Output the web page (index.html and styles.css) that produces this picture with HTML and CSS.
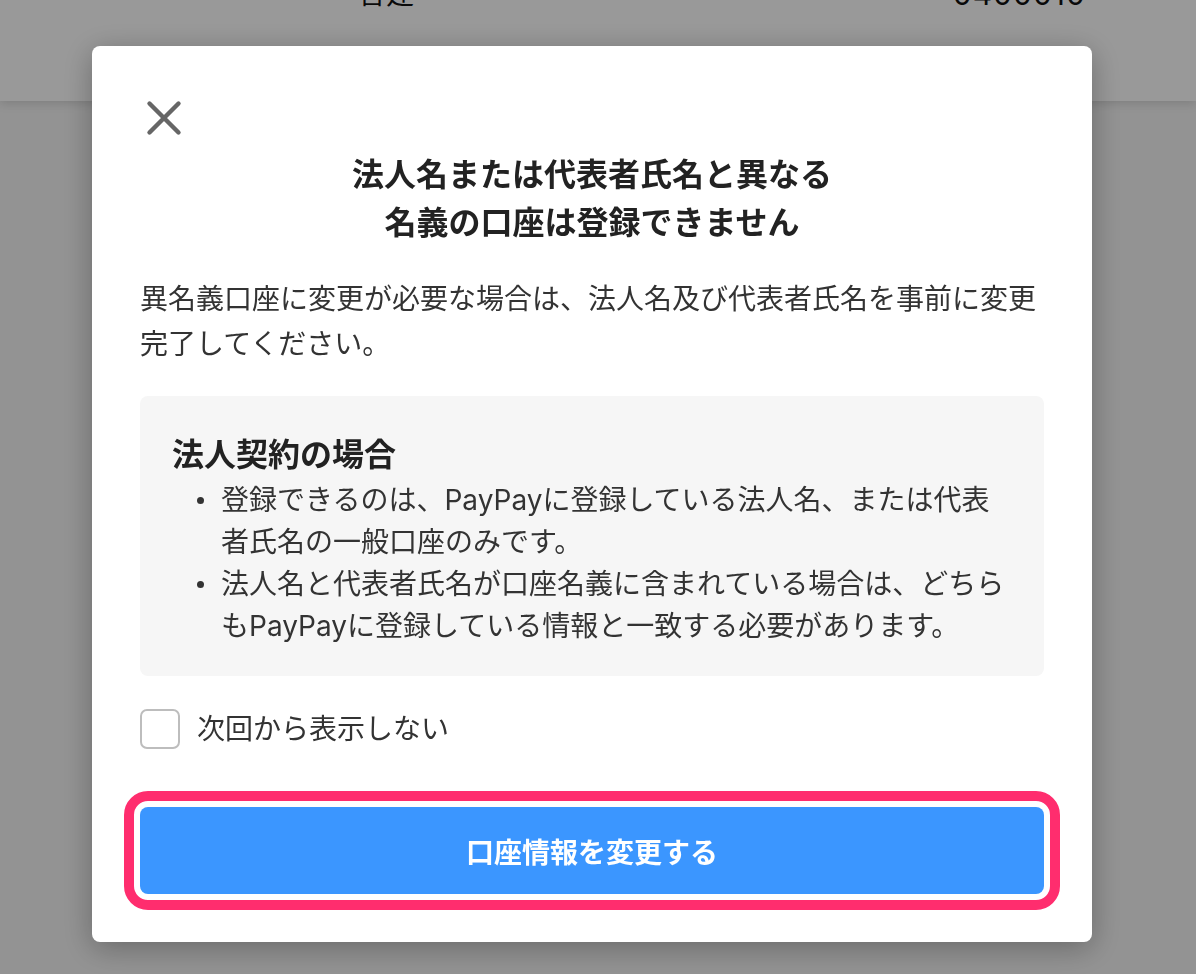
FILE: index.html
```html
<!DOCTYPE html>
<html lang="ja">
<head>
<meta charset="utf-8">
<title>口座情報</title>
<link rel="stylesheet" href="styles.css">
</head>
<body>
  <header class="page-header">
    <div class="header-row">
      <span class="header-label">合建</span>
      <span class="header-value">0400010</span>
    </div>
  </header>
  <main class="page-main"></main>

  <div class="overlay">
    <div class="modal" role="dialog">
      <button class="close-btn" aria-label="閉じる">
        <svg viewBox="0 0 36 36" width="36" height="36" aria-hidden="true">
          <path d="M3.5 3.5 L32.5 32.5 M32.5 3.5 L3.5 32.5" fill="none" stroke="#666" stroke-width="4.4" stroke-linecap="round"/>
        </svg>
      </button>
      <h2 class="modal-title">法人名または代表者氏名と異なる<br>名義の口座は登録できません</h2>
      <p class="modal-text">異名義口座に変更が必要な場合は、法人名及び代表者氏名を事前に変更完了してください。</p>
      <section class="info-box">
        <h3 class="info-title">法人契約の場合</h3>
        <ul class="info-list">
          <li>登録できるのは、PayPayに登録している法人名、または代表者氏名の一般口座のみです。</li>
          <li>法人名と代表者氏名が口座名義に含まれている場合は、どちらもPayPayに登録している情報と一致する必要があります。</li>
        </ul>
      </section>
      <label class="check-row">
        <span class="checkbox"></span>
        <span class="check-label">次回から表示しない</span>
      </label>
      <button class="primary-btn">口座情報を変更する</button>
    </div>
  </div>
</body>
</html>
```

FILE: styles.css
```css
* {
  box-sizing: border-box;
}

html, body {
  margin: 0;
  padding: 0;
}

body {
  width: 1196px;
  height: 974px;
  overflow: hidden;
  background: #f5f5f5;
  font-family: "Inter", "Noto Sans CJK JP", sans-serif;
  color: #333;
}

.page-header {
  height: 101px;
  background: #fff;
  box-shadow: 0 2px 10px rgba(0, 0, 0, 0.15);
  overflow: hidden;
  position: relative;
  z-index: 1;
}

.header-row {
  display: flex;
  justify-content: space-between;
  margin-top: -20px;
  padding: 0 110px 0 358px;
  font-size: 28px;
  line-height: 28px;
  color: #111;
}

.header-value {
  font-size: 30px;
  letter-spacing: 1px;
}

.overlay {
  position: fixed;
  inset: 0;
  background: rgba(0, 0, 0, 0.4);
  z-index: 10;
  padding: 46px 0 0 92px;
}

.modal {
  width: 1000px;
  background: #fff;
  border-radius: 8px;
  padding: 48px;
  box-shadow: 0 6px 30px rgba(0, 0, 0, 0.3);
  display: flex;
  flex-direction: column;
}

.close-btn {
  width: 48px;
  height: 48px;
  padding: 0;
  border: 0;
  background: transparent;
  display: flex;
  align-items: center;
  justify-content: center;
  cursor: pointer;
}

.modal-title {
  margin: 9px 0 0;
  font-size: 32px;
  line-height: 48px;
  font-weight: 700;
  color: #222;
  text-align: center;
}

.modal-text {
  margin: 30px 0 0;
  font-size: 28px;
  line-height: 45px;
  color: #333;
}

.info-box {
  margin-top: 29px;
  background: #f6f6f6;
  border-radius: 8px;
  padding: 35px 32px 29px;
}

.info-title {
  margin: 0;
  font-size: 32px;
  line-height: 48px;
  font-weight: 700;
  color: #222;
}

.info-list {
  list-style: none;
  margin: 0;
  padding: 0;
}

.info-list li {
  display: flex;
  font-size: 28px;
  line-height: 42px;
  color: #333;
}

.info-list li::before {
  content: "";
  flex-shrink: 0;
  width: 7px;
  height: 7px;
  border-radius: 50%;
  background: #333;
  margin: 18px 17px 0 25px;
}

.check-row {
  margin-top: 33px;
  display: flex;
  align-items: center;
  gap: 17px;
}

.checkbox {
  width: 40px;
  height: 40px;
  border: 2px solid #bdbdbd;
  border-radius: 7px;
  background: #fff;
}

.check-label {
  font-size: 28px;
  line-height: 40px;
  color: #333;
}

.primary-btn {
  margin-top: 58px;
  height: 87px;
  border: 0;
  border-radius: 8px;
  background: #3b96ff;
  color: #fff;
  font-family: "Inter", "Noto Sans CJK JP", sans-serif;
  font-size: 28px;
  font-weight: 700;
  outline: 10px solid #ff2d6e;
  outline-offset: 6px;
  cursor: pointer;
}
```
